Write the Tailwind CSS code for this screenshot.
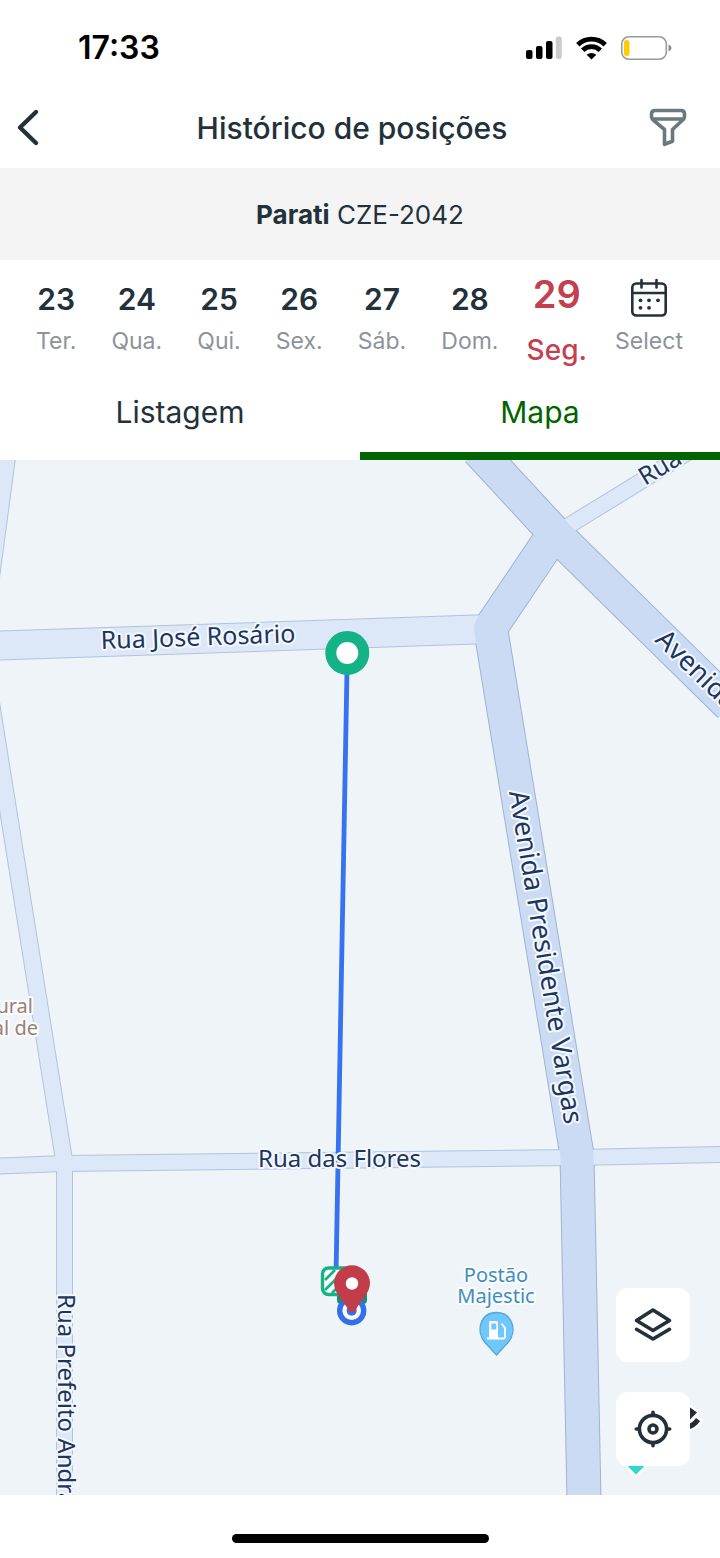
<!DOCTYPE html>
<html lang="pt-BR">
<head>
<meta charset="utf-8">
<meta name="viewport" content="width=device-width, initial-scale=1">
<title>Histórico de posições</title>
<script src="https://cdn.jsdelivr.net/npm/@tailwindcss/browser@4"></script>
</head>
<body class="flex min-h-screen flex-col bg-white font-['Inter',sans-serif] text-[#22313a]">
  <!-- Status bar -->
  <div class="flex h-24 items-center justify-between pr-12 pl-[78px] text-black">
    <time class="text-[32px] leading-10 font-semibold">17:33</time>
    <div class="flex items-center gap-[14px]">
      <svg class="h-6 w-9" viewBox="0 0 36 24" aria-label="Sinal">
        <rect x="0" y="14" width="6.500" height="9" rx="2"/>
        <rect x="10" y="10" width="6.500" height="13" rx="2"/>
        <rect x="20" y="5" width="6.500" height="18" rx="2"/>
        <rect x="29.800" y="0.500" width="6" height="22.500" rx="2" fill="#ccc"/>
      </svg>
      <svg class="h-6 w-[31px]" viewBox="0 0 31 24" aria-label="Wi-Fi">
        <g fill="none" stroke="#000" stroke-width="4.800">
          <path d="M1.800 8.800A19.600 19.600 0 0 1 29.200 8.800"/>
          <path d="M6.700 14.200A12.400 12.400 0 0 1 24.300 14.200"/>
        </g>
        <path d="M15.500 23.500L10.700 18.800A7 7 0 0 1 20.300 18.800Z"/>
      </svg>
      <svg class="h-6 w-[51px]" viewBox="0 0 51 24" aria-label="Bateria fraca">
        <rect x="0.800" y="0.800" width="44.500" height="22.400" rx="7" fill="none" stroke="#9b9b9b" stroke-width="1.600"/>
        <rect x="3" y="4" width="5.500" height="16" rx="2.500" fill="#ffcc00"/>
        <path d="M47.500 8.500c4 1.500 4 5.500 0 7z" fill="#8e8e8e"/>
      </svg>
    </div>
  </div>

  <!-- Navigation -->
  <header class="flex h-[72px] items-center justify-between pr-8 pb-[10px] pl-4">
    <button type="button" aria-label="Voltar" class="h-10 w-10">
      <svg class="h-10 w-6" viewBox="0 0 24 40" fill="none" stroke="#22313a" stroke-width="4.400" stroke-linecap="round" stroke-linejoin="round"><path d="M20 5L4 20.500L20 36"/></svg>
    </button>
    <h1 class="pt-[2px] text-[30px] leading-10 font-medium">Histórico de posições</h1>
    <button type="button" aria-label="Filtrar" class="h-10 w-10">
      <svg class="h-10 w-10" viewBox="0 0 40 40" fill="none" stroke="#6b7880" stroke-width="3.600" stroke-linejoin="round"><path d="M7 3.500H33Q36.500 3.500 36.500 7V9.500Q36.500 11.500 35 12.800L24.500 22.500V34.200L16.500 37.300V22.500L5 12.800Q3.500 11.500 3.500 9.500V7Q3.500 3.500 7 3.500ZM4 12H36"/></svg>
    </button>
  </header>

  <p class="bg-[#f4f4f4] pt-[27px] pb-[25px] text-center text-[26px] leading-10"><strong class="font-bold">Parati</strong> CZE-2042</p>

  <!-- Day selector -->
  <nav aria-label="Dias" class="flex h-28 items-start justify-between pr-[37px] pl-9 text-[23px] leading-8 text-[#8b9499]">
    <button type="button" class="flex flex-col items-center gap-[10px] pt-[23px]"><b class="text-[30px] font-semibold text-[#22313a]">23</b><span>Ter.</span></button>
    <button type="button" class="flex flex-col items-center gap-[10px] pt-[23px]"><b class="text-[30px] font-semibold text-[#22313a]">24</b><span>Qua.</span></button>
    <button type="button" class="flex flex-col items-center gap-[10px] pt-[23px]"><b class="text-[30px] font-semibold text-[#22313a]">25</b><span>Qui.</span></button>
    <button type="button" class="flex flex-col items-center gap-[10px] pt-[23px]"><b class="text-[30px] font-semibold text-[#22313a]">26</b><span>Sex.</span></button>
    <button type="button" class="flex flex-col items-center gap-[10px] pt-[23px]"><b class="text-[30px] font-semibold text-[#22313a]">27</b><span>Sáb.</span></button>
    <button type="button" class="flex flex-col items-center gap-[10px] pt-[23px]"><b class="text-[30px] font-semibold text-[#22313a]">28</b><span>Dom.</span></button>
    <button type="button" aria-current="date" class="-mx-[7px] flex flex-col items-center gap-4 pt-[14px] text-[28px] leading-10 font-medium text-[#c5404e]"><b class="text-[38px] font-semibold">29</b><span>Seg.</span></button>
    <button type="button" class="flex flex-col items-center gap-[7px] pt-[18px]">
      <svg class="h-10 w-10" viewBox="0 0 40 40" fill="none" stroke="#22313a" stroke-width="2.600" stroke-linecap="round"><rect x="3.300" y="5.500" width="33.400" height="32" rx="4"/><path d="M3.300 15H36.700M12.500 2V9.500M27.500 2V9.500"/><g fill="#22313a" stroke="none"><circle cx="11.500" cy="22.300" r="1.900"/><circle cx="20" cy="22.300" r="1.900"/><circle cx="29" cy="22.300" r="1.900"/><circle cx="11.500" cy="29.800" r="1.900"/><circle cx="20" cy="29.800" r="1.900"/></g></svg>
      <span>Select</span>
    </button>
  </nav>

  <!-- Tabs -->
  <div role="tablist" class="grid h-[88px] grid-cols-2 text-[30px] leading-10">
    <button type="button" role="tab" aria-selected="false" class="border-b-8 border-transparent">Listagem</button>
    <button type="button" role="tab" aria-selected="true" class="border-b-8 border-[#006400] text-[#006400]">Mapa</button>
  </div>

  <!-- Map -->
  <main class="relative min-h-[1035px] flex-1 overflow-hidden bg-[#eff4f8]">
    <svg class="absolute inset-0 h-full w-full font-['Noto_Sans',sans-serif]" viewBox="0 460 720 1035" preserveAspectRatio="xMidYMid slice" role="img" aria-label="Mapa do trajeto">
      <defs>
        <g id="minor">
          <path stroke-width="16" d="M8 450L-10 585"/>
          <path stroke-width="16" d="M-19 640L64 1160"/>
          <path stroke-width="15" d="M64.500 1164V1500"/>
          <path stroke-width="15" d="M-5 1166.200L64 1163.500L576 1157.500L725 1154.500"/>
          <path stroke-width="15" d="M560 531L700 445"/>
        </g>
        <path id="rosario" d="M-5 645.700L490 629"/>
        <g id="major">
          <path d="M478 450L557 535.500L730 705.500"/>
          <path d="M547 544L490.500 628L577 1155L584 1500"/>
        </g>
      </defs>
      <g fill="none" stroke-linejoin="round">
        <g stroke="#b3c3dc">
          <path stroke-width="18" d="M8 450L-10 585"/>
          <path stroke-width="18" d="M-19 640L64 1160"/>
          <path stroke-width="17" d="M64.500 1164V1500"/>
          <path stroke-width="17" d="M-5 1166.200L64 1163.500L576 1157.500L725 1154.500"/>
          <path stroke-width="17" d="M560 531L700 445"/>
          <use href="#rosario" stroke-width="30"/>
        </g>
        <use href="#major" stroke="#9fb3d2" stroke-width="35"/>
        <g stroke="#dce7f7"><use href="#minor"/><use href="#rosario" stroke-width="28"/></g>
        <use href="#major" stroke="#cbdbf4" stroke-width="33"/>
      </g>

      <!-- Route -->
      <path d="M347 670L341 998L336 1275" fill="none" stroke="#3672f2" stroke-width="4.800"/>

      <!-- Street names -->
      <g font-size="24" fill="#1b365f" stroke="#f5f8fd" stroke-width="4" stroke-linejoin="round" paint-order="stroke">
        <text font-size="25" transform="translate(101 649) rotate(-2)">Rua José Rosário</text>
        <text x="258" y="1167">Rua das Flores</text>
        <text font-size="27" transform="translate(509 792) rotate(80.500)">Avenida Presidente Vargas</text>
        <text transform="translate(58 1294) rotate(90)">Rua Prefeito Andrade</text>
        <text font-size="27" transform="translate(654 641) rotate(44)">Avenida</text>
        <text font-size="25" transform="translate(645 486) rotate(-31)">Rua</text>
      </g>
      <g font-size="20" stroke="#fafcfe" stroke-width="4" stroke-linejoin="round" paint-order="stroke">
        <g fill="#9a8078" text-anchor="end"><text x="33" y="1013">ural</text><text x="38" y="1035">al de</text></g>
        <g fill="#3f8fba" text-anchor="middle"><text x="496" y="1282">Postão</text><text x="496" y="1303">Majestic</text></g>
      </g>

      <!-- Fuel station -->
      <path d="M496.500 1355L485 1342.500C475.500 1332 480 1312.500 496.500 1312.500S517.500 1332 508 1342.500Z" fill="#6fc7ff" stroke="#5aa6d2" stroke-width="1.400"/>
      <path d="M489 1322.500q0-1.500 1.500-1.500h6q1.500 0 1.500 1.500v15h1v2h-12v-2h2zM491.300 1323.500v6h5v-6z" fill="#fff" fill-rule="evenodd"/>
      <path d="M498 1338.500h5.500q1.500 0 1.500-1.500V1328L501.500 1323.500" fill="none" stroke="#fff" stroke-width="1.800"/>

      <!-- Start marker -->
      <circle cx="347.300" cy="653" r="16.500" fill="#fff" stroke="#14b287" stroke-width="11"/>

      <!-- End markers -->
      <rect x="337" y="1288" width="30" height="16" rx="4" fill="#158f6d"/>
      <rect x="322.500" y="1268" width="36" height="26.500" rx="6" fill="#fff" stroke="#14b287" stroke-width="3.400"/>
      <path d="M325 1280L335 1270M325 1290L345 1270M332 1293L350 1275" stroke="#14b287" stroke-width="2.800"/>
      <circle cx="351.700" cy="1310.700" r="12" fill="#fff" stroke="#3370e8" stroke-width="5.400"/>
      <circle cx="351.700" cy="1310.700" r="5" fill="#3370e8"/>
      <path d="M352 1312.500Q348.500 1312 347 1307.500C342 1299.500 334 1292.500 334 1283.300A18 18 0 0 1 370 1283.300C370 1292.500 362 1299.500 357 1307.500Q355.500 1312 352 1312.500Z" fill="#c23d4a"/>
      <circle cx="352" cy="1283.500" r="6.200" fill="#fff"/>

      <!-- Landmarks partly covered by the location control -->
      <path d="M624 1464H648L636 1476Z" fill="#2fd8cc" stroke="#fff" stroke-width="2"/>
      <g stroke="#fff" stroke-width="5" stroke-linejoin="round" paint-order="stroke" fill="#252b37">
        <path d="M684 1403L697 1412.500L688 1421.500Z"/>
        <path d="M686 1425Q693 1423 696 1418L700 1421Q696 1428 686 1430Z"/>
      </g>
    </svg>

    <div class="absolute right-[30px] bottom-[29px] flex flex-col gap-[30px]">
      <button type="button" aria-label="Camadas" class="flex h-[74px] w-[74px] items-center justify-center rounded-xl bg-white">
        <svg class="h-10 w-10" viewBox="0 0 40 40" fill="none" stroke="#22313a" stroke-width="3.600" stroke-linecap="round" stroke-linejoin="round"><path d="M20 5L36.500 15.500L20 25.500L3.500 15.500Z"/><path d="M3.500 24.300L20 34L36.500 24.300"/></svg>
      </button>
      <button type="button" aria-label="Minha localização" class="flex h-[74px] w-[74px] items-center justify-center rounded-xl bg-white">
        <svg class="h-10 w-10" viewBox="0 0 40 40" fill="none" stroke="#22313a" stroke-width="3.600" stroke-linecap="round"><circle cx="20" cy="20" r="13.600"/><circle cx="20" cy="20" r="4"/><path d="M20 3.300V6M20 34V36.700M3.300 20H6M34 20H36.700"/></svg>
      </button>
    </div>
  </main>

  <!-- Home indicator -->
  <footer class="flex h-[63px] justify-center bg-white pt-[39px]"><div class="h-[9px] w-[257px] rounded-full bg-black"></div></footer>
</body>
</html>
